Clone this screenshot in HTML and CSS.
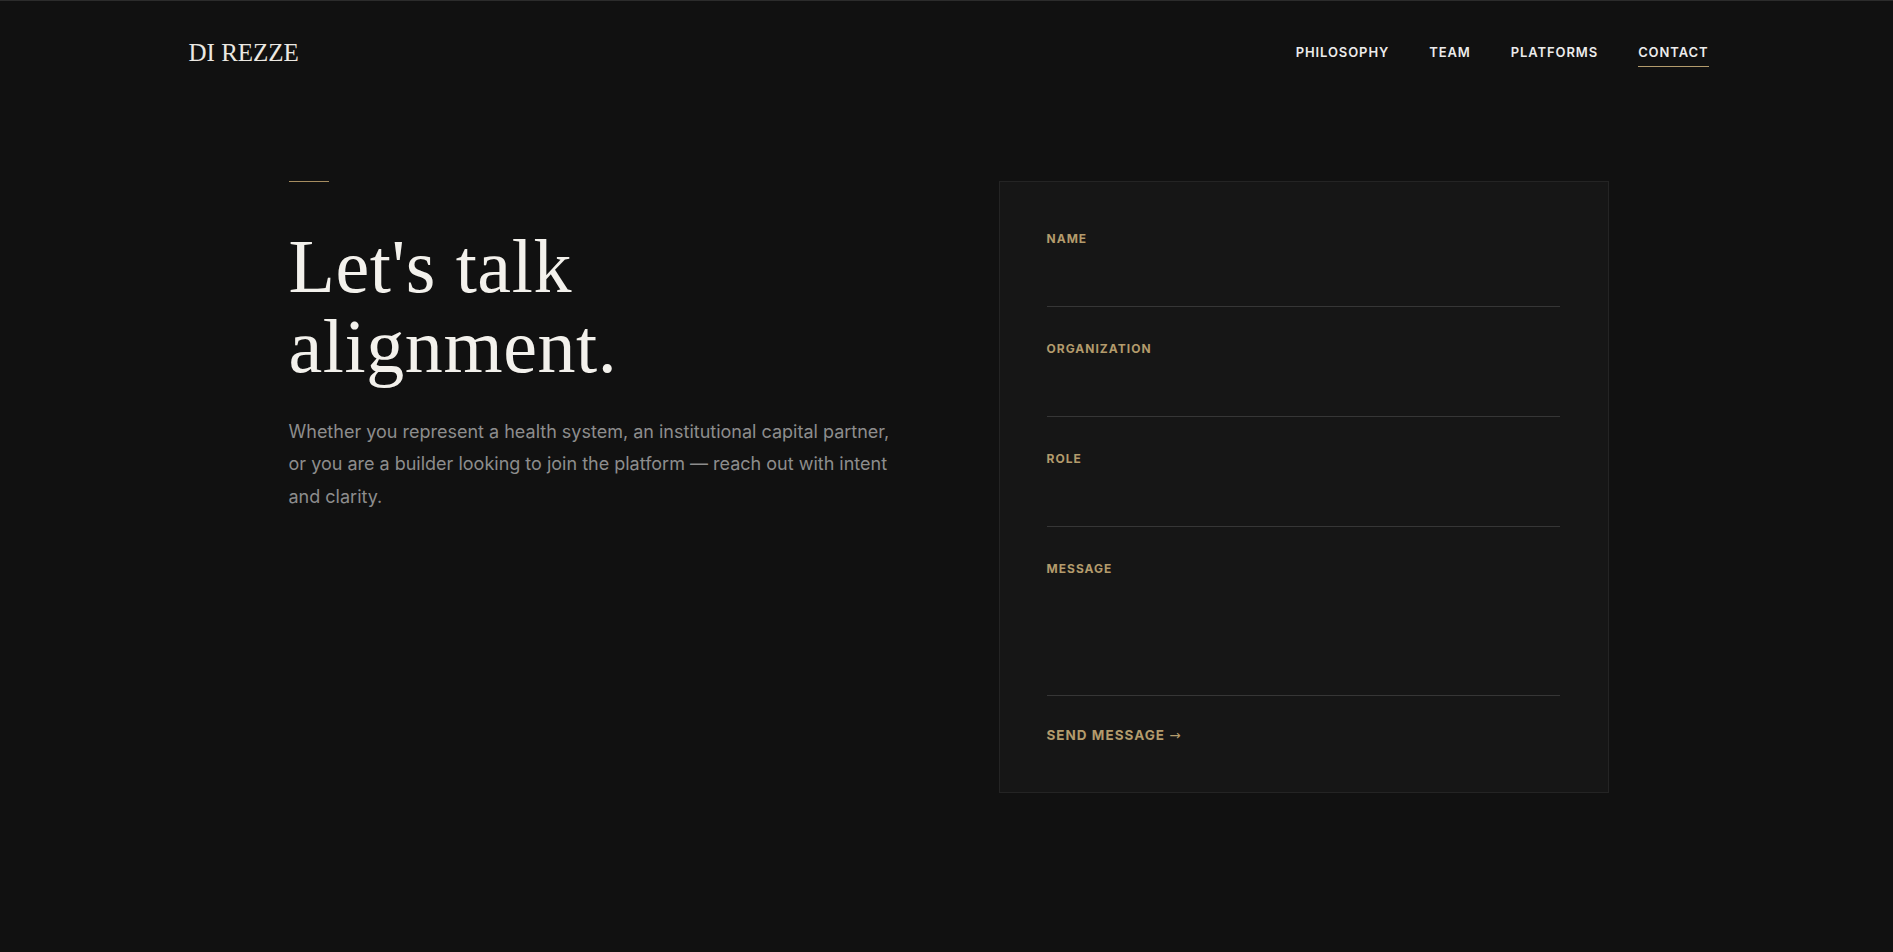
FILE: index.html
```html
<!DOCTYPE html>
<html lang="en">
<head>
<meta charset="utf-8">
<title>Contact — Di Rezze</title>
<link rel="stylesheet" href="styles.css">
</head>
<body>
<div class="page">
  <header class="site-header">
    <div class="brand">DI REZZE</div>
    <nav class="nav">
      <a class="nav-link" href="#">PHILOSOPHY</a>
      <a class="nav-link" href="#">TEAM</a>
      <a class="nav-link" href="#">PLATFORMS</a>
      <a class="nav-link active" href="#">CONTACT</a>
    </nav>
  </header>
  <main class="contact">
    <section class="intro">
      <div class="rule"></div>
      <h1 class="title">Let's talk<br>alignment.</h1>
      <p class="lead">Whether you represent a health system, an institutional capital partner, or you are a builder looking to join the platform — reach out with intent and clarity.</p>
    </section>
    <form class="card">
      <div class="field">
        <label class="label" for="f-name">NAME</label>
        <input class="input" id="f-name" type="text">
      </div>
      <div class="field">
        <label class="label" for="f-org">ORGANIZATION</label>
        <input class="input" id="f-org" type="text">
      </div>
      <div class="field">
        <label class="label" for="f-role">ROLE</label>
        <input class="input" id="f-role" type="text">
      </div>
      <div class="field">
        <label class="label" for="f-msg">MESSAGE</label>
        <textarea class="input textarea" id="f-msg"></textarea>
      </div>
      <button class="send" type="button">SEND MESSAGE <span class="arrow">→</span></button>
    </form>
  </main>
</div>
</body>
</html>
```

FILE: styles.css
```css
* { box-sizing: border-box; }
html, body { margin: 0; padding: 0; }
body {
  background: #111111;
  color: #ececec;
  font-family: Inter, "Noto Sans", "Liberation Sans", sans-serif;
}
.page {
  min-height: 952px;
  border-top: 1px solid #2c2c2c;
}
.site-header {
  max-width: 1524px;
  margin: 0 auto;
  height: 103px;
  display: flex;
  align-items: center;
  justify-content: space-between;
  padding-left: 4px;
}
.brand {
  font-family: "Liberation Serif", "Times New Roman", serif;
  font-size: 25px;
  letter-spacing: 0;
  color: #ebe8e2;
}
.nav {
  display: flex;
  gap: 40px;
}
.nav-link {
  font-size: 13px;
  line-height: 16px;
  font-weight: 600;
  letter-spacing: 0.07em;
  color: #ececec;
  text-decoration: none;
  padding: 6px 0;
  border-bottom: 1px solid transparent;
}
.nav-link.active { border-bottom-color: #b39b6c; }

.contact {
  max-width: 1324px;
  margin: 0 auto;
  padding: 77px 0 0 4px;
  display: grid;
  grid-template-columns: 1fr 1fr;
  gap: 100px;
  align-items: start;
}
.rule {
  width: 40px;
  height: 1px;
  background: #a68d60;
  margin-bottom: 44px;
}
.title {
  margin: 0;
  font-family: "Liberation Serif", "Times New Roman", serif;
  font-weight: 400;
  font-size: 76px;
  line-height: 80px;
  color: #f3f1ec;
  letter-spacing: 0.6px;
}
.lead {
  margin: 30px 0 0;
  max-width: 610px;
  font-size: 18px;
  line-height: 32.4px;
  color: #8d8d8d;
}
.card {
  background: #161616;
  border: 1px solid #242424;
  padding: 47px 48px 48px 47px;
  display: flex;
  flex-direction: column;
}
.field {
  display: flex;
  flex-direction: column;
  margin-bottom: 32px;
}
.field:last-of-type { margin-bottom: 30px; }
.label {
  font-size: 12px;
  line-height: 20px;
  font-weight: 700;
  letter-spacing: 0.085em;
  color: #b39b6c;
  margin-bottom: 10px;
}
.input {
  height: 48px;
  background: transparent;
  border: none;
  border-bottom: 1px solid #363636;
  color: #ececec;
  font-family: inherit;
  font-size: 16px;
  padding: 0;
  outline: none;
}
.textarea {
  height: 107px;
  resize: none;
}
.send {
  align-self: flex-start;
  background: none;
  border: none;
  padding: 0;
  font-family: inherit;
  font-size: 13.5px;
  line-height: 18px;
  font-weight: 700;
  letter-spacing: 0.075em;
  color: #b39b6c;
  cursor: pointer;
}
.arrow {
  font-family: "DejaVu Sans", sans-serif;
  font-weight: 400;
  letter-spacing: 0;
}
```
